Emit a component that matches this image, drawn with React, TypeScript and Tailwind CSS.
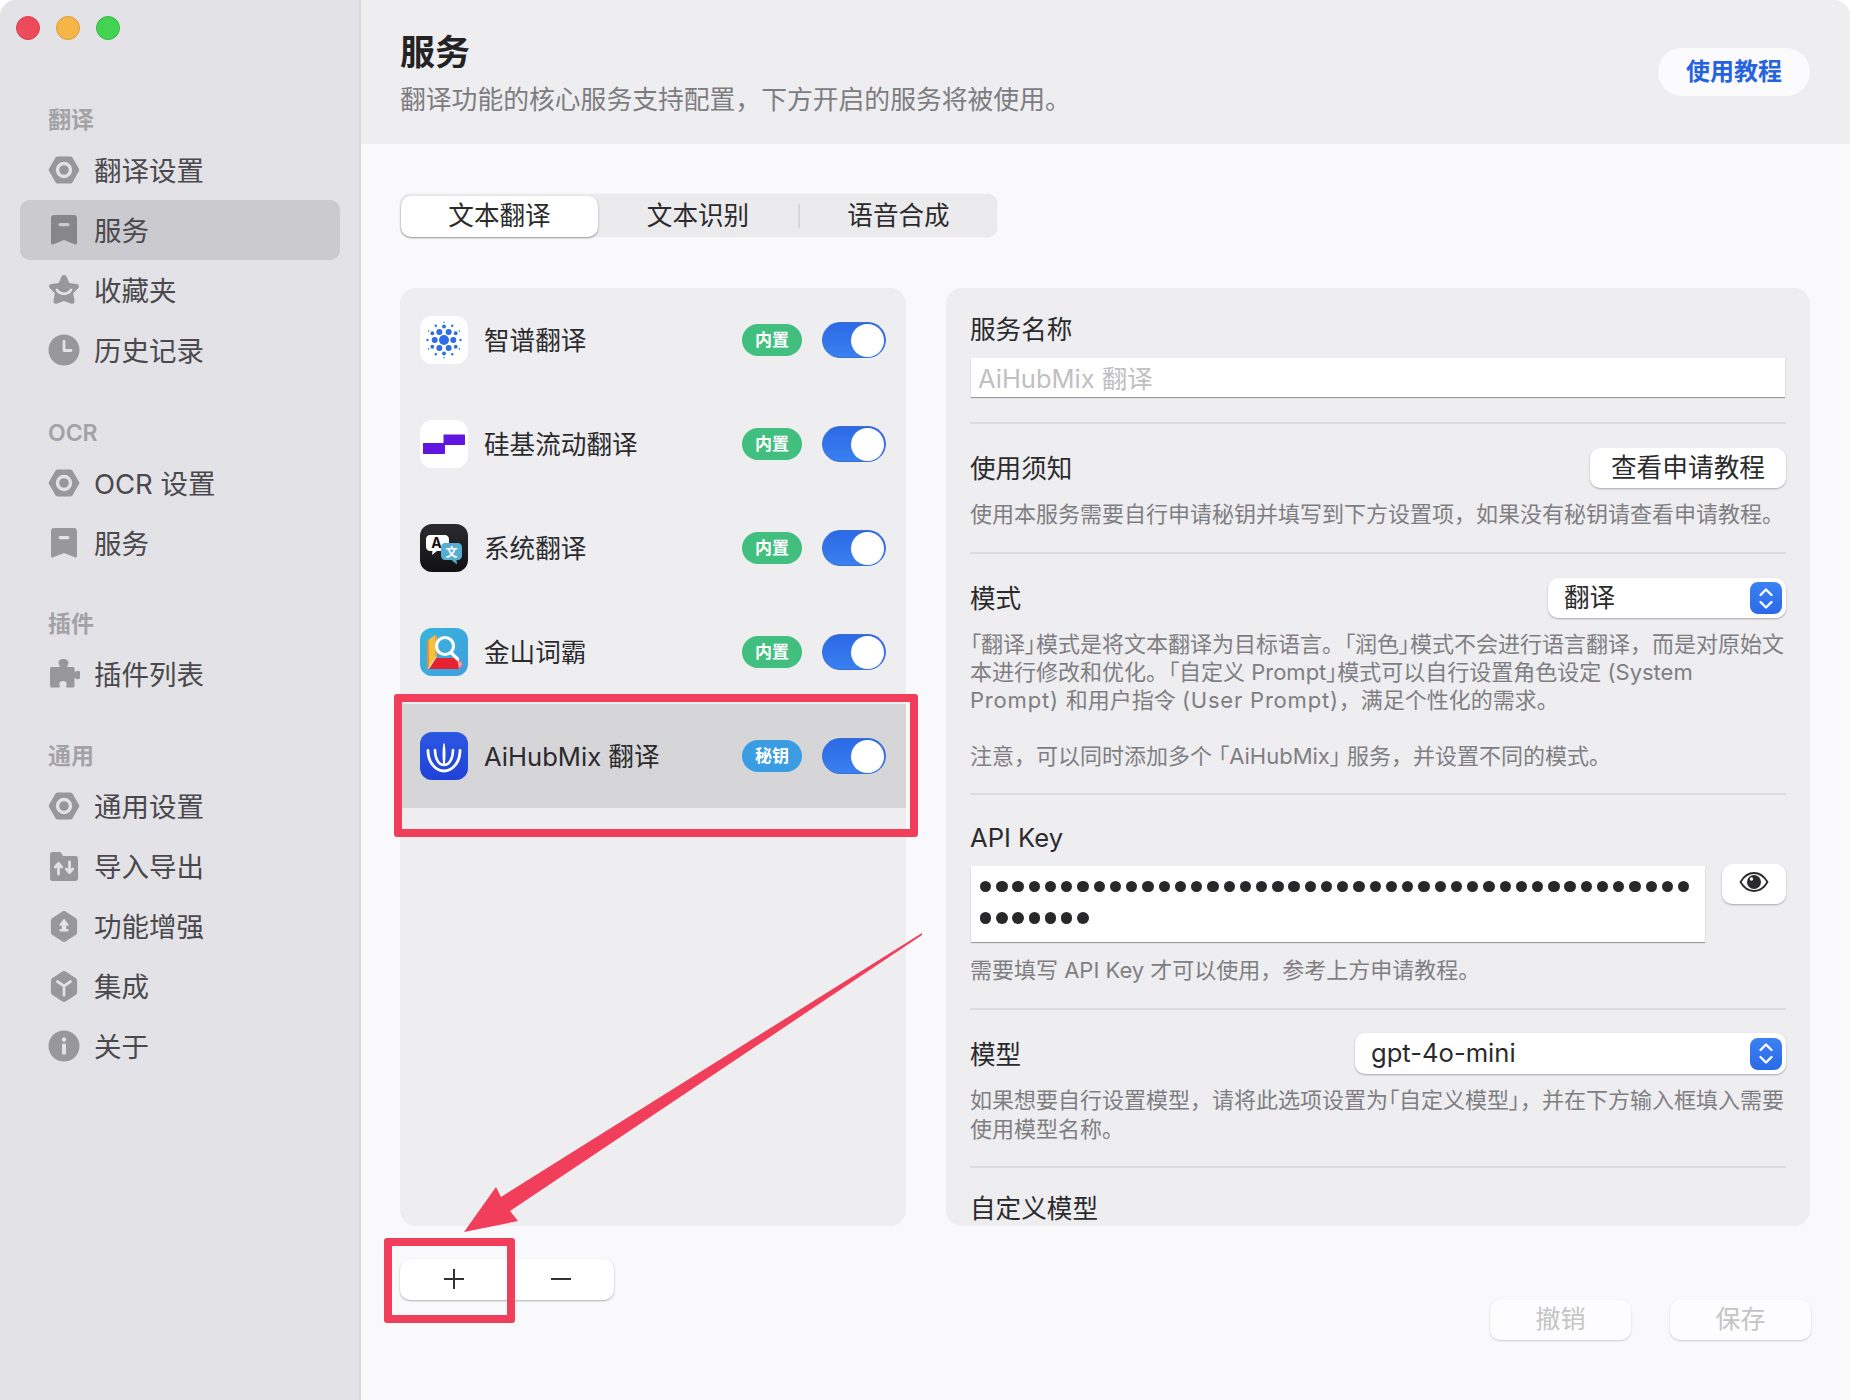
import type { ReactNode } from 'react';

const FONT = 'font-["Inter","Noto_Sans_CJK_SC",sans-serif]';
const SIDE_GRAY = '#98979c';
const SIDE_BG = '#e3e2e6';

// sidebar icons, all on a 32x32 box
function HexRing() {
  return (
    <svg width="32" height="32" viewBox="0 0 32 32">
      <path d="M9.500 2.500h13c.8 0 1.500.4 1.900 1.100l6.600 11.200c.4.700.4 1.600 0 2.300l-6.600 11.300c-.4.700-1.100 1.100-1.900 1.100h-13c-.8 0-1.500-.4-1.900-1.100L1 17.100c-.4-.7-.4-1.600 0-2.300L7.600 3.600c.4-.7 1.100-1.100 1.900-1.100z" fill={SIDE_GRAY} />
      <circle cx="16" cy="16" r="6.500" fill="none" stroke={SIDE_BG} strokeWidth="3.400" />
    </svg>
  );
}

function Bookmark({ color = SIDE_GRAY, cut = SIDE_BG }: { color?: string; cut?: string }) {
  return (
    <svg width="32" height="32" viewBox="0 0 32 32">
      <path d="M6 1h20c1.600 0 3 1.300 3 3v25c0 1.200-1.200 1.900-2.300 1.300L16 26l-10.700 4.300C4.200 30.900 3 30.200 3 29V4c0-1.700 1.400-3 3-3z" fill={color} />
      <rect x="10.500" y="9" width="11" height="3.200" rx="1.600" fill={cut} />
    </svg>
  );
}

function StarSmile() {
  return (
    <svg width="32" height="32" viewBox="0 0 32 32">
      <path d="M16 1c1.300 0 2.200.8 2.700 1.900l2.600 6.200 7.200.9c2.500.3 3.200 2.700 1.600 4.300l-4.900 5 1.300 7.400c.4 2.300-1.700 3.800-3.700 2.700L16 27l-6.800 2.400c-2 1.100-4.100-.4-3.700-2.700l1.300-7.400-4.900-5C.3 12.700 1 10.300 3.500 10l7.200-.9 2.600-6.200C13.800 1.800 14.700 1 16 1z" fill={SIDE_GRAY} />
      <path d="M9 16c3.500 5 10.500 5 14 0" fill="none" stroke={SIDE_BG} strokeWidth="2.800" strokeLinecap="round" />
    </svg>
  );
}

function ClockFill() {
  return (
    <svg width="32" height="32" viewBox="0 0 32 32">
      <circle cx="16" cy="16" r="15.500" fill={SIDE_GRAY} />
      <path d="M16 7.500V16.500h7" fill="none" stroke={SIDE_BG} strokeWidth="2.800" strokeLinecap="round" strokeLinejoin="round" />
    </svg>
  );
}

function PuzzleFill() {
  return (
    <svg width="32" height="32" viewBox="0 0 32 32">
      <path d="M2 10.500c0-.8.700-1.500 1.500-1.500H11c.8 0 1-.6.600-1.200-.6-.9-1.100-1.800-1.100-3C10.500 2.500 13 1 15.500 1s5 1.500 5 3.800c0 1.200-.5 2.100-1.100 3-.4.600-.2 1.200.6 1.200h5c.8 0 1.500.7 1.500 1.500v2.500c0 .8.600 1 1.200.6.800-.5 1.500-.9 2.300-.9 1.900 0 3 2 3 4.300s-1.100 4.300-3 4.300c-.8 0-1.500-.4-2.300-.9-.6-.4-1.200-.2-1.200.6V28c0 .8-.7 1.500-1.500 1.500h-6c-.8 0-1.200-.6-.9-1.300.3-.8.600-1.300.6-2.200 0-1.700-1.500-3-3.700-3s-3.700 1.300-3.700 3c0 .9.300 1.400.6 2.200.3.700-.1 1.300-.9 1.300H3.500c-.8 0-1.500-.7-1.500-1.500z" fill={SIDE_GRAY} />
    </svg>
  );
}

function FolderArrows() {
  return (
    <svg width="28" height="32" viewBox="0 0 28 32">
      <path d="M2.500 2h7c.9 0 1.600.5 2 1.300L13 6h12.500C26.900 6 28 7.100 28 8.500v20c0 1.400-1.100 2.500-2.500 2.500h-23C1.100 31 0 29.900 0 28.500v-24C0 3.100 1.100 2 2.500 2z" fill={SIDE_GRAY} />
      <path d="M8.500 24v-10M5.300 17l3.200-3.500 3.200 3.500M19.500 12v10M16.300 19l3.200 3.500 3.200-3.500" fill="none" stroke={SIDE_BG} strokeWidth="2.800" strokeLinecap="round" strokeLinejoin="round" />
    </svg>
  );
}

const HEX_TALL = 'M14.200 1.500c1.100-.6 2.500-.6 3.600 0l11.400 6.400c1.100.6 1.800 1.800 1.800 3.100v11c0 1.300-.7 2.500-1.800 3.100l-11.400 6.400c-1.100.6-2.500.6-3.600 0L2.800 25.100C1.700 24.500 1 23.300 1 22V11c0-1.300.7-2.500 1.800-3.100z';

function HexArrow() {
  return (
    <svg width="28" height="32" viewBox="0 0 32 32" preserveAspectRatio="none">
      <path d={HEX_TALL} fill={SIDE_GRAY} />
      <path d="M16 8.500l6 7h-3.500v3.500h2.500v2.500H11v-2.500h2.500v-3.500H10z" fill={SIDE_BG} />
    </svg>
  );
}

function HexY() {
  return (
    <svg width="28" height="32" viewBox="0 0 32 32" preserveAspectRatio="none">
      <path d={HEX_TALL} fill={SIDE_GRAY} />
      <path d="M8.500 11.500L16 16l7.500-4.500M16 16v9" fill="none" stroke={SIDE_BG} strokeWidth="3" strokeLinecap="round" strokeLinejoin="round" />
    </svg>
  );
}

function InfoFill() {
  return (
    <svg width="32" height="32" viewBox="0 0 32 32">
      <circle cx="16" cy="16" r="15.500" fill={SIDE_GRAY} />
      <circle cx="16" cy="9.500" r="2.200" fill={SIDE_BG} />
      <rect x="14" y="13.500" width="4" height="11" rx="1.200" fill={SIDE_BG} />
    </svg>
  );
}

function NavRow({ icon, label, active }: { icon: ReactNode; label: string; active?: boolean }) {
  return (
    <div className={`ml-[20px] mr-[19px] flex h-[60px] items-center gap-[14px] rounded-[10px] pl-[28px] ${active ? 'bg-[#cbcace]' : ''}`}>
      <span className="flex w-[32px] justify-center">{icon}</span>
      <span className="pt-[4px] text-[27.500px] text-[#4a494d]">{label}</span>
    </div>
  );
}

function NavLabel({ children, className }: { children: ReactNode; className: string }) {
  return (
    <div className={`mb-[6px] flex h-[30px] items-center pl-[48px] pt-[2px] text-[23px] font-semibold text-[#a3a2a7] ${className}`}>
      {children}
    </div>
  );
}

function Sidebar() {
  return (
    <aside className="flex w-[361px] shrink-0 flex-col border-r-2 border-[#d8d7db] bg-[#e3e2e6]">
      <div className="flex h-[104px] gap-[16px] pl-[16px] pt-[16px]">
        <span className="h-[24px] w-[24px] rounded-full border border-[#d8404f] bg-[#ed4a5c]" />
        <span className="h-[24px] w-[24px] rounded-full border border-[#dd9c35] bg-[#f5b547]" />
        <span className="h-[24px] w-[24px] rounded-full border border-[#3cb548] bg-[#42d350]" />
      </div>
      <NavLabel className="">翻译</NavLabel>
      <NavRow icon={<HexRing />} label="翻译设置" />
      <NavRow icon={<Bookmark color="#87868b" cut="#cbcace" />} label="服务" active />
      <NavRow icon={<StarSmile />} label="收藏夹" />
      <NavRow icon={<ClockFill />} label="历史记录" />
      <NavLabel className="mt-[37px]">OCR</NavLabel>
      <NavRow icon={<HexRing />} label="OCR 设置" />
      <NavRow icon={<Bookmark />} label="服务" />
      <NavLabel className="mt-[35px]">插件</NavLabel>
      <NavRow icon={<PuzzleFill />} label="插件列表" />
      <NavLabel className="mt-[36px]">通用</NavLabel>
      <NavRow icon={<HexRing />} label="通用设置" />
      <NavRow icon={<FolderArrows />} label="导入导出" />
      <NavRow icon={<HexArrow />} label="功能增强" />
      <NavRow icon={<HexY />} label="集成" />
      <NavRow icon={<InfoFill />} label="关于" />
    </aside>
  );
}

// app icons in the service list, 48x48
function ZhipuIcon() {
  const rings = [
    { n: 6, rad: 9.300, r: 3, start: 0 },
    { n: 6, rad: 13.500, r: 1.900, start: 30 },
    { n: 6, rad: 16.500, r: 1.200, start: 0 },
    { n: 6, rad: 17.800, r: 0.800, start: 30 },
  ];
  return (
    <svg width="48" height="48" viewBox="0 0 48 48">
      <rect width="48" height="48" rx="12" fill="#fff" />
      <circle cx="24" cy="24" r="5" fill="#2f6de6" />
      {rings.map((ring) =>
        Array.from({ length: ring.n }, (_, i) => {
          const a = ((ring.start + i * 60) * Math.PI) / 180;
          return <circle key={`${ring.rad}-${i}`} cx={24 + ring.rad * Math.cos(a)} cy={24 + ring.rad * Math.sin(a)} r={ring.r} fill="#2f6de6" />;
        }),
      )}
    </svg>
  );
}

function SiliconIcon() {
  return (
    <svg width="48" height="48" viewBox="0 0 48 48">
      <rect width="48" height="48" rx="12" fill="#fff" />
      <path d="M24 14.500h20.500c.3 0 .5.200.5.500v9.500c0 .3-.2.500-.5.500H25v8.500c0 .3-.2.500-.5.500h-21c-.3 0-.5-.2-.5-.5v-10c0-.3.200-.5.500-.5H23.500v-8c0-.3.200-.5.500-.5z" fill="#6016e0" />
    </svg>
  );
}

function SystemIcon() {
  return (
    <svg width="48" height="48" viewBox="0 0 48 48">
      <defs>
        <linearGradient id="sysbg" x1="0" y1="0" x2="0" y2="1">
          <stop offset="0" stopColor="#2c2b30" />
          <stop offset="1" stopColor="#111113" />
        </linearGradient>
      </defs>
      <rect width="48" height="48" rx="12" fill="url(#sysbg)" />
      <path d="M10 11h15c2.200 0 4 1.800 4 4v8c0 2.200-1.800 4-4 4h-8l-5 4 .5-4H10c-2.200 0-4-1.800-4-4v-8c0-2.200 1.800-4 4-4z" fill="#fff" />
      <text x="16.500" y="24" fontSize="14" fontWeight="700" textAnchor="middle" fill="#111" fontFamily="Inter, sans-serif">A</text>
      <path d="M25 19h13c2.200 0 4 1.800 4 4v9c0 2.200-1.800 4-4 4h-1.500l.5 4.500-5.500-4.500H25c-2.200 0-4-1.800-4-4v-9c0-2.200 1.800-4 4-4z" fill="#56aed2" />
      <text x="31.500" y="33" fontSize="12" fontWeight="700" textAnchor="middle" fill="#fff" fontFamily="Noto Sans CJK SC, sans-serif">文</text>
    </svg>
  );
}

function JinshanIcon() {
  return (
    <svg width="48" height="48" viewBox="0 0 48 48">
      <defs>
        <linearGradient id="jsbg" x1="0" y1="0" x2="1" y2="1">
          <stop offset="0" stopColor="#37b5dc" />
          <stop offset="1" stopColor="#3e9fe0" />
        </linearGradient>
      </defs>
      <rect width="48" height="48" rx="12" fill="url(#jsbg)" />
      <path d="M7 13l8-6v27l-8 7z" fill="#f2c13d" />
      <path d="M7 13l2-2v29l-2 1z" fill="#ee8b3a" />
      <path d="M15 7l2 1v25l-2 1z" fill="#f0a13a" />
      <path d="M16 30h21l6 6-4 5H9z" fill="#e5222f" />
      <path d="M37 30l6 6-4 5-1-5z" fill="#f09aa5" />
      <path d="M9 41l7-11v-2l-8 12z" fill="#f7d9a6" />
      <circle cx="25" cy="18" r="8.500" fill="none" stroke="#fff" strokeWidth="3.200" />
      <path d="M31 24.500l6.500 6.500" stroke="#fff" strokeWidth="3.200" strokeLinecap="round" />
    </svg>
  );
}

function AihubIcon() {
  return (
    <svg width="48" height="48" viewBox="0 0 48 48">
      <defs>
        <linearGradient id="aibg" x1="0" y1="0" x2="0" y2="1">
          <stop offset="0" stopColor="#2b57e2" />
          <stop offset="1" stopColor="#2142d8" />
        </linearGradient>
      </defs>
      <rect width="48" height="48" rx="12" fill="url(#aibg)" />
      <path d="M8 18.500C8 31 16 39 24 39s16-8 16-20.500" fill="none" stroke="#fff" strokeWidth="2.800" strokeLinecap="round" />
      <path d="M15 18c0 9 4 15 9 15s9-6 9-15" fill="none" stroke="#fff" strokeWidth="2.600" strokeLinecap="round" />
      <path d="M24 12c-1 6-1 14 0 21 1-7 1-15 0-21z" fill="#fff" stroke="#fff" strokeWidth="1.400" strokeLinejoin="round" />
    </svg>
  );
}

function Toggle() {
  return (
    <div className="flex h-[36px] w-[64px] items-center justify-end rounded-full border border-[#3b6fd4] bg-linear-to-b from-[#2c69e6] to-[#3a80f0] pr-[1px]">
      <span className="h-[33px] w-[33px] rounded-full bg-white" />
    </div>
  );
}

function ServiceRow({ icon, name, badge, selected }: { icon: ReactNode; name: string; badge: string; selected?: boolean }) {
  return (
    <div className={`flex h-[104px] items-center pl-[20px] pr-[20px] ${selected ? 'bg-[#d6d5d8]' : ''}`}>
      {icon}
      <span className="ml-[16px] flex-1 pt-[3px] text-[25.600px] text-[#2b2b2d]">{name}</span>
      <span className={`flex h-[32px] w-[60px] items-center justify-center rounded-full pt-[1px] text-[17px] font-bold text-white ${badge === '秘钥' ? 'bg-[#3a9de3]' : 'bg-[#41bf7f]'}`}>
        {badge}
      </span>
      <span className="ml-[20px]">
        <Toggle />
      </span>
    </div>
  );
}

function Stepper() {
  return (
    <span className="flex h-[32px] w-[32px] flex-col items-center justify-center gap-[3px] rounded-[8px] bg-linear-to-b from-[#3c82f1] to-[#2b69e8]">
      <svg width="16" height="10" viewBox="0 0 16 10">
        <path d="M2.500 8L8 2.500 13.500 8" fill="none" stroke="#fff" strokeWidth="2.400" strokeLinecap="round" strokeLinejoin="round" />
      </svg>
      <svg width="16" height="10" viewBox="0 0 16 10">
        <path d="M2.500 2L8 7.500 13.500 2" fill="none" stroke="#fff" strokeWidth="2.400" strokeLinecap="round" strokeLinejoin="round" />
      </svg>
    </span>
  );
}

function Select({ value, width, height }: { value: string; width: string; height: string }) {
  return (
    <div className={`flex items-center justify-between rounded-[10px] bg-white pl-[16px] pr-[4px] text-[25.600px] text-[#2b2b2d] shadow-[0_1px_2px_rgba(0,0,0,0.3)] ${width} ${height}`}>
      {value}
      <Stepper />
    </div>
  );
}

function Divider({ className }: { className: string }) {
  return <div className={`h-[2px] bg-[#dddce0] ${className}`} />;
}

function Label({ children }: { children: ReactNode }) {
  return <div className="flex h-[34px] items-center pt-[3px] text-[25.600px] text-[#2b2b2d]">{children}</div>;
}

function Hint({ children, className }: { children: ReactNode; className: string }) {
  return <div className={`whitespace-nowrap text-[22px] text-[#7f7f83] ${className}`}>{children}</div>;
}

// half-width corner brackets, as on macOS
function Q({ children }: { children: ReactNode }) {
  return <span className="[font-feature-settings:'palt']">{children}</span>;
}

function ServiceForm() {
  return (
    <section className="h-[938px] w-[864px] overflow-hidden rounded-[16px] bg-[#eeedf0] px-[24px] pt-[24px]">
      <Label>服务名称</Label>
      <div className="ml-[1px] mr-[1px] mt-[12px] flex h-[39px] items-center bg-white pl-[7px] pt-[4px] text-[25.500px] text-[#c0c0c3] shadow-[0_1px_1px_rgba(0,0,0,0.35)]">
        AiHubMix 翻译
      </div>
      <Divider className="mt-[25px]" />

      <div className="mt-[24px] flex h-[40px] items-center justify-between">
        <Label>使用须知</Label>
        <button className="h-[40px] w-[196px] rounded-[10px] bg-white text-[25.700px] text-[#2b2b2d] shadow-[0_1px_2px_rgba(0,0,0,0.3)]">查看申请教程</button>
      </div>
      <Hint className="mt-[12px] leading-[28px]">使用本服务需要自行申请秘钥并填写到下方设置项，如果没有秘钥请查看申请教程。</Hint>
      <Divider className="mt-[24px]" />

      <div className="mt-[24px] flex h-[40px] items-center justify-between">
        <Label>模式</Label>
        <Select value="翻译" width="w-[238px]" height="h-[40px]" />
      </div>
      <Hint className="mt-[12px] leading-[28px]">
        <Q>「翻译」</Q>模式是将文本翻译为目标语言。<Q>「润色」</Q>模式不会进行语言翻译，而是对原始文
        <br />
        本进行修改和优化。<Q>「自定义 Prompt」</Q>模式可以自行设置角色设定 (System
        <br />
        <span className="tracking-[0.800px]">Prompt) </span>和用户指令 <span className="tracking-[0.800px]">(User Prompt)</span>，满足个性化的需求。
        <br />
        <br />
        注意，可以同时添加多个 <Q>「AiHubMix」</Q> 服务，并设置不同的模式。
      </Hint>
      <Divider className="mt-[23px]" />

      <div className="mt-[25px]">
        <Label>API Key</Label>
      </div>
      <div className="mt-[12px] flex items-start justify-between">
        <div className="ml-[1px] h-[76px] w-[734px] bg-white pl-[9px] pr-[4px] pt-[15px] shadow-[0_1px_1px_rgba(0,0,0,0.35)]">
          <div className="flex flex-wrap gap-x-[4.950px] gap-y-[20px]">
            {Array.from({ length: 51 }, (_, i) => (
              <span key={i} className="h-[11.300px] w-[11.300px] rounded-full bg-[#28282a]" />
            ))}
          </div>
        </div>
        <button className="-mt-[2px] flex h-[40px] w-[64px] items-center justify-center rounded-[10px] bg-white pb-[4px] shadow-[0_1px_2px_rgba(0,0,0,0.3)]">
          <svg width="30" height="22" viewBox="0 0 30 22">
            <path d="M1.500 11C5 5 9.500 2 15 2s10 3 13.500 9C25 17 20.500 20 15 20S5 17 1.500 11z" fill="none" stroke="#2b2b2d" strokeWidth="1.800" strokeLinejoin="round" />
            <circle cx="15" cy="11" r="7" fill="#2b2b2d" />
            <circle cx="12.500" cy="8" r="1.700" fill="#fff" />
          </svg>
        </button>
      </div>
      <Hint className="mt-[14px] leading-[28px]">需要填写 API Key 才可以使用，参考上方申请教程。</Hint>
      <Divider className="mt-[24px]" />

      <div className="mt-[23px] flex h-[41px] items-center justify-between">
        <Label>模型</Label>
        <Select value="gpt-4o-mini" width="w-[431px]" height="h-[41px]" />
      </div>
      <Hint className="mt-[12px] leading-[29px]">
        如果想要自行设置模型，请将此选项设置为<Q>「自定义模型」</Q>，并在下方输入框填入需要
        <br />
        使用模型名称。
      </Hint>
      <Divider className="mt-[22px]" />
      <div className="mt-[23px]">
        <Label>自定义模型</Label>
      </div>
    </section>
  );
}

function Annotations() {
  return (
    <>
      <div className="absolute left-[394px] top-[694px] h-[143px] w-[524px] rounded-[3px] border-[8px] border-[#f03e5b]" />
      <div className="absolute left-[384px] top-[1238px] h-[85px] w-[131px] rounded-[3px] border-[8px] border-[#f03e5b]" />
      <svg className="pointer-events-none absolute left-0 top-0" width="1850" height="1400">
        <path d="M922 933 L922 935 L510 1211 L518 1221 L464 1232 L496 1187 L501 1197 Z" fill="#f03e5b" />
      </svg>
    </>
  );
}

export default function App() {
  return (
    <div className={`relative flex h-[1400px] w-[1850px] overflow-hidden rounded-t-[16px] bg-[#f9f8fa] ${FONT}`}>
      <Sidebar />
      <main className="flex min-w-0 flex-1 flex-col">
        <header className="flex h-[144px] shrink-0 items-start justify-between bg-[#eeedf0] pl-[39px] pr-[40px]">
          <div className="pt-[29px]">
            <h1 className="h-[46px] text-[35px] font-semibold leading-[46px] text-[#232325]">服务</h1>
            <p className="mt-[8px] text-[25.800px] leading-[34px] text-[#7d7d81]">翻译功能的核心服务支持配置，下方开启的服务将被使用。</p>
          </div>
          <button className="mt-[48px] h-[48px] w-[152px] rounded-full bg-[#fbfafc] text-[24px] font-semibold text-[#2563e0]">使用教程</button>
        </header>

        <div className="flex flex-1 flex-col pl-[39px] pr-[39px]">
          <div className="mt-[50px] flex h-[43px] w-[597px] items-center rounded-[10px] bg-[#ebeaed] pt-[1px] text-[25.600px] text-[#2b2b2d] shadow-[0_0_1px_rgba(0,0,0,0.2)]">
            <div className="ml-[1px] flex h-[41px] w-[197px] items-center justify-center rounded-[10px] bg-white shadow-[0_1px_2px_rgba(0,0,0,0.4)]">文本翻译</div>
            <div className="flex w-[200px] justify-center">文本识别</div>
            <div className="h-[24px] w-[2px] bg-[#d8d7db]" />
            <div className="flex flex-1 justify-center">语音合成</div>
          </div>

          <div className="mt-[51px] flex gap-[40px]">
            <section className="h-[938px] w-[506px] overflow-hidden rounded-[16px] bg-[#eeedf0]">
              <ServiceRow icon={<ZhipuIcon />} name="智谱翻译" badge="内置" />
              <ServiceRow icon={<SiliconIcon />} name="硅基流动翻译" badge="内置" />
              <ServiceRow icon={<SystemIcon />} name="系统翻译" badge="内置" />
              <ServiceRow icon={<JinshanIcon />} name="金山词霸" badge="内置" />
              <ServiceRow icon={<AihubIcon />} name="AiHubMix 翻译" badge="秘钥" selected />
            </section>
            <ServiceForm />
          </div>

          <div className="mt-[33px] flex h-[81px] justify-between">
            <div className="flex h-[41px] w-[214px] items-center rounded-[10px] bg-white pb-[2px] shadow-[0_1px_2px_rgba(0,0,0,0.3)]">
              <span className="flex flex-1 justify-center">
                <svg width="22" height="22" viewBox="0 0 22 22">
                  <path d="M11 1v20M1 11h20" stroke="#333335" strokeWidth="2" />
                </svg>
              </span>
              <span className="flex flex-1 justify-center">
                <svg width="22" height="22" viewBox="0 0 22 22">
                  <path d="M1 11h20" stroke="#333335" strokeWidth="2" />
                </svg>
              </span>
            </div>
            <div className="flex items-end gap-[39px]">
              <button className="h-[40px] w-[141px] rounded-[10px] bg-[#fdfcfe] text-[25px] text-[#c4c4c7] shadow-[0_1px_2px_rgba(0,0,0,0.18)]">撤销</button>
              <button className="h-[40px] w-[141px] rounded-[10px] bg-[#fdfcfe] text-[25px] text-[#c4c4c7] shadow-[0_1px_2px_rgba(0,0,0,0.18)]">保存</button>
            </div>
          </div>
        </div>
      </main>
      <Annotations />
    </div>
  );
}
